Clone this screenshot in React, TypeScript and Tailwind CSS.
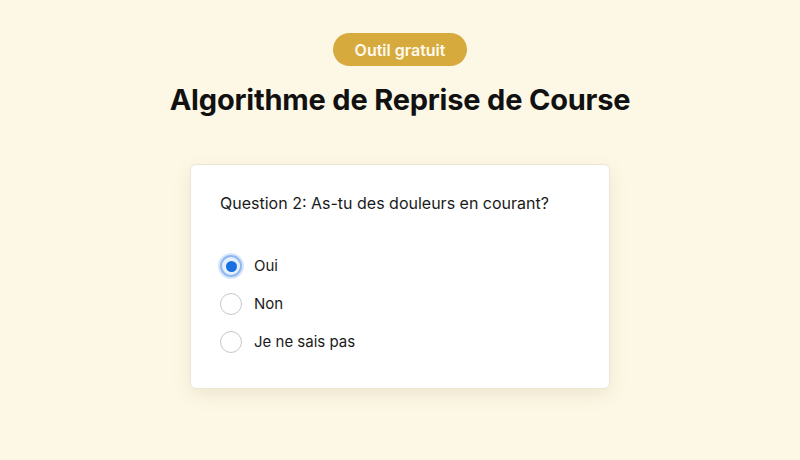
import React, { useState } from "react";

const options = ["Oui", "Non", "Je ne sais pas"];

export default function App() {
  const [sel, setSel] = useState(0);
  return (
    <div
      className="w-[800px] h-[460px] bg-[#fdf8e6] flex flex-col items-center"
      style={{ fontFamily: "Inter, 'Noto Sans', sans-serif" }}
    >
      <div className="mt-[33px] h-[33px] px-[22px] rounded-full bg-[#d6aa3c] flex items-center text-[#fffaf0] text-[16px] font-semibold">
        Outil gratuit
      </div>
      <h1 className="mt-[14px] text-[29px] leading-[40px] font-bold text-[#111111] tracking-[-0.2px]">
        Algorithme de Reprise de Course
      </h1>
      <div className="mt-[44px] w-[420px] h-[225px] bg-white rounded-[6px] border border-[#ebe6d6] shadow-[0_6px_18px_rgba(120,100,40,0.12)] pl-[29px] pt-[26px]">
        <div className="text-[16px] leading-[24px] text-[#1a1a1a]">
          Question 2: As-tu des douleurs en courant?
        </div>
        <div className="mt-[40px] flex flex-col gap-[16px]">
          {options.map((o, i) => (
            <div
              key={o}
              className="flex items-center gap-[12px] cursor-pointer"
              onClick={() => setSel(i)}
            >
              {sel === i ? (
                <div className="w-[22px] h-[22px] rounded-full border-[2px] border-[#8fb8f0] bg-[#e6effc] flex items-center justify-center shadow-[0_0_0_2px_rgba(140,180,240,0.35)]">
                  <div className="w-[11px] h-[11px] rounded-full bg-[#1a6fe0]" />
                </div>
              ) : (
                <div className="w-[22px] h-[22px] rounded-full border-[1.5px] border-[#c8c8c8] bg-white" />
              )}
              <span className="text-[15px] leading-[22px] text-[#1a1a1a]">{o}</span>
            </div>
          ))}
        </div>
      </div>
    </div>
  );
}
